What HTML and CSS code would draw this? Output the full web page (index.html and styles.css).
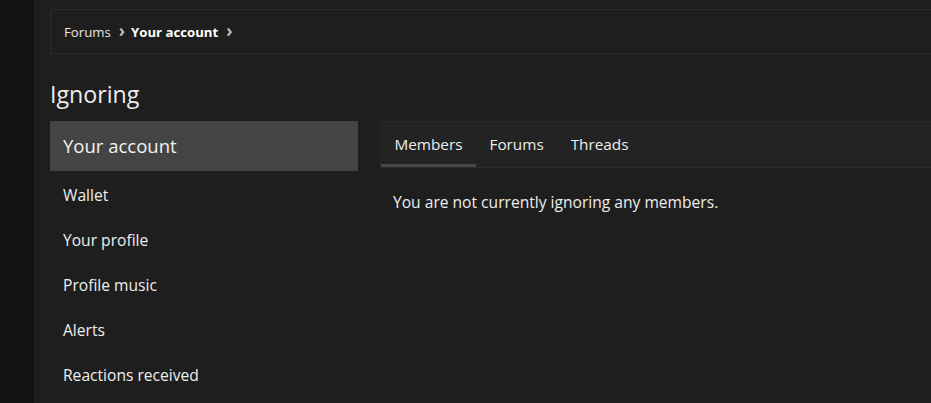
FILE: index.html
```html
<!DOCTYPE html>
<html>
<head>
<meta charset="utf-8">
<link rel="stylesheet" href="styles.css">
</head>
<body>
<div class="page">
  <div class="strip"></div>
  <div class="main">
    <div class="breadcrumb">
      <span class="crumb">Forums</span>
      <span class="chev">&#x203A;</span>
      <span class="crumb current">Your account</span>
      <span class="chev">&#x203A;</span>
    </div>
    <h1 class="title">Ignoring</h1>
    <div class="columns">
      <nav class="sidebar">
        <div class="side-head">Your account</div>
        <div class="side-item">Wallet</div>
        <div class="side-item">Your profile</div>
        <div class="side-item">Profile music</div>
        <div class="side-item">Alerts</div>
        <div class="side-item">Reactions received</div>
      </nav>
      <section class="panel">
        <div class="tabs">
          <span class="tab active">Members</span>
          <span class="tab">Forums</span>
          <span class="tab">Threads</span>
        </div>
        <div class="panel-body">You are not currently ignoring any members.</div>
      </section>
    </div>
  </div>
</div>
</body>
</html>
```
FILE: styles.css
```css
html, body {
  margin: 0;
  padding: 0;
  background: #1e1e1e;
  overflow: hidden;
}
body {
  font-family: "Open Sans", "Noto Sans", sans-serif;
  color: #ececec;
}
.page {
  display: flex;
  width: 1100px;
  height: 403px;
}
.strip {
  width: 34px;
  flex: none;
  background: #121212;
}
.main {
  flex: 1;
  padding: 9px 0 0 16px;
}
.breadcrumb {
  height: 43px;
  border: 1px solid #2a2a2a;
  display: flex;
  align-items: center;
  padding-left: 13px;
  font-size: 13.2px;
  color: #e6e6e6;
}
.crumb.current {
  font-weight: bold;
  color: #fff;
}
.chev {
  font-weight: bold;
  font-size: 17px;
  color: #bdbdbd;
  margin: -3px 6px 0 8px;
}
.title {
  font-size: 23.2px;
  font-weight: normal;
  margin: 26px 0 0 0;
  height: 41px;
  line-height: 28px;
  color: #eee;
}
.columns {
  display: flex;
  gap: 22px;
}
.sidebar {
  width: 308px;
  flex: none;
}
.side-head {
  height: 50px;
  box-sizing: border-box;
  padding-bottom: 2px;
  background: #444;
  display: flex;
  align-items: center;
  padding-left: 13px;
  font-size: 18.5px;
  color: #f2f2f2;
  margin-bottom: 1px;
}
.side-item {
  height: 45px;
  display: flex;
  align-items: center;
  padding-left: 13px;
  font-size: 15.6px;
  color: #eee;
}
.panel {
  flex: 1;
}
.tabs {
  height: 45px;
  background: #232323;
  border-top: 1px solid #2a2a2a;
  border-bottom: 1px solid #2c2c2c;
  display: flex;
  align-items: stretch;
  padding-left: 1px;
}
.tab {
  display: flex;
  align-items: center;
  padding: 0 13.5px;
  font-size: 15.3px;
  color: #eee;
  border-bottom: 3px solid transparent;
  padding-top: 1px;
}
.tab.active {
  border-bottom-color: #474747;
}
.panel-body {
  padding: 0 13px;
  height: 68px;
  display: flex;
  align-items: center;
  font-size: 15.6px;
  color: #eee;
}
```
